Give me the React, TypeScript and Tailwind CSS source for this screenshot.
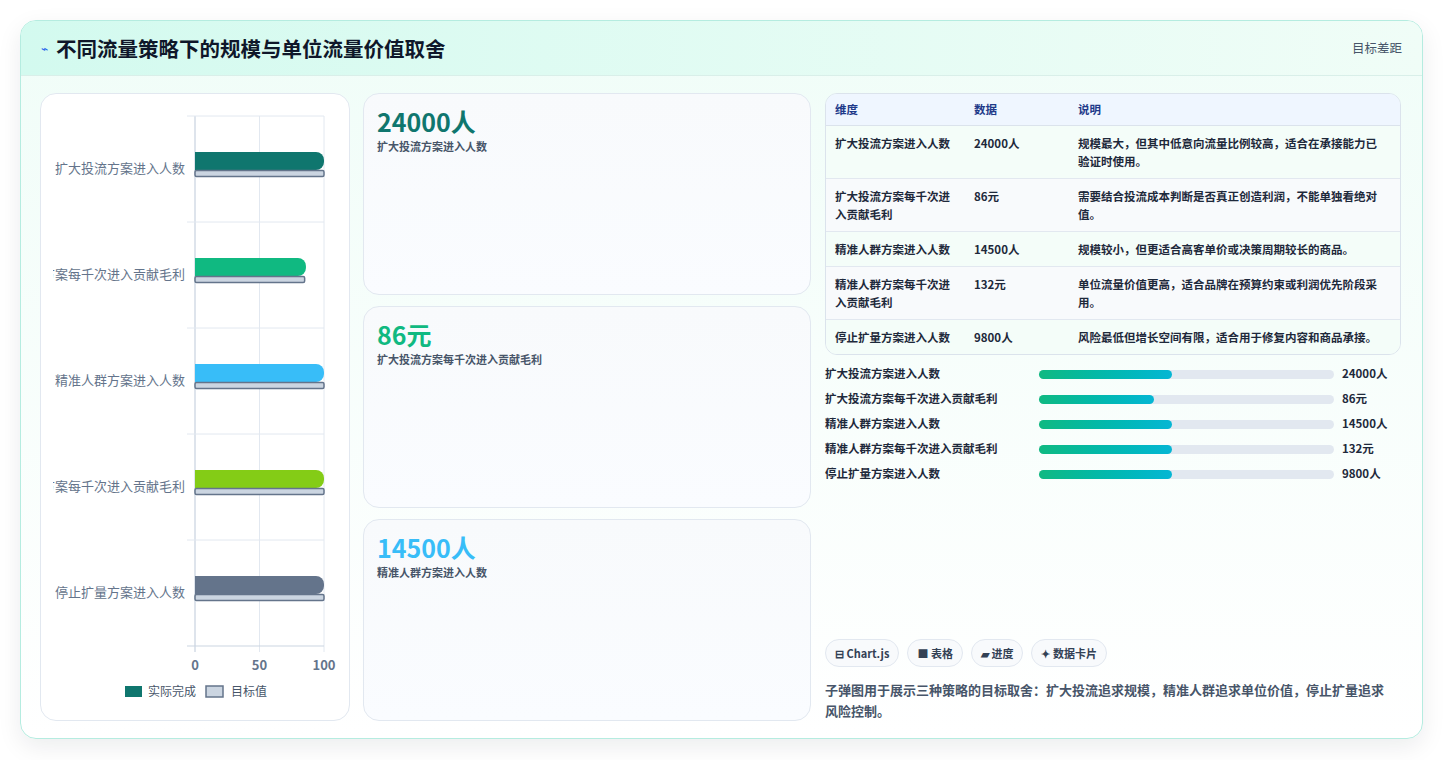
import React from "react";

const cats = [
  { l: "扩大投流方案进入人数", a: 100, t: 100, c: "#0f766e" },
  { l: "扩大投流方案每千次进入贡献毛利", a: 86, t: 85, c: "#10b981" },
  { l: "精准人群方案进入人数", a: 100, t: 100, c: "#38bdf8" },
  { l: "精准人群方案每千次进入贡献毛利", a: 100, t: 100, c: "#84cc16" },
  { l: "停止扩量方案进入人数", a: 100, t: 100, c: "#64748b" },
];

const rows = [
  ["扩大投流方案进入人数", "24000人", "规模最大，但其中低意向流量比例较高，适合在承接能力已验证时使用。"],
  ["扩大投流方案每千次进入贡献毛利", "86元", "需要结合投流成本判断是否真正创造利润，不能单独看绝对值。"],
  ["精准人群方案进入人数", "14500人", "规模较小，但更适合高客单价或决策周期较长的商品。"],
  ["精准人群方案每千次进入贡献毛利", "132元", "单位流量价值更高，适合品牌在预算约束或利润优先阶段采用。"],
  ["停止扩量方案进入人数", "9800人", "风险最低但增长空间有限，适合用于修复内容和商品承接。"],
];

const prog = [
  ["扩大投流方案进入人数", 45, "24000人"],
  ["扩大投流方案每千次进入贡献毛利", 39, "86元"],
  ["精准人群方案进入人数", 45, "14500人"],
  ["精准人群方案每千次进入贡献毛利", 45, "132元"],
  ["停止扩量方案进入人数", 45, "9800人"],
] as const;

function Chart() {
  const x0 = 154, x1 = 283, y0 = 22, y1 = 552;
  const band = (y1 - y0) / 5;
  const sx = (v: number) => x0 + ((x1 - x0) * v) / 100;
  return (
    <svg width="309" height="627" className="block">
      <defs>
        <clipPath id="lab"><rect x="12" y="0" width="136" height="600" /></clipPath>
      </defs>
      {[0, 50, 100].map((v) => (
        <line key={v} x1={sx(v)} x2={sx(v)} y1={y0} y2={y1 + 6} stroke="#e2e8f0" />
      ))}
      <line x1={x0} x2={x0} y1={y0} y2={y1 + 6} stroke="#cbd5e1" />
      {[0, 1, 2, 3, 4, 5].map((i) => (
        <line key={i} x1={x0 - 8} x2={x1} y1={y0 + band * i} y2={y0 + band * i} stroke={i === 5 ? "#cbd5e1" : "#e2e8f0"} />
      ))}
      {cats.map((c, i) => {
        const cy = y0 + band * i + band / 2;
        return (
          <g key={i}>
            <g clipPath="url(#lab)">
              <text x={144} y={cy + 4} textAnchor="end" fontSize="13" fill="#64748b">{c.l}</text>
            </g>
            <path d={`M${x0} ${cy - 17} H${sx(c.a) - 8} a8 8 0 0 1 8 8 v2 a8 8 0 0 1 -8 8 H${x0} Z`} fill={c.c} />
            <rect x={x0} y={cy + 1.5} width={sx(c.t) - x0} height={6} rx={1.5} fill="#cbd5e1" stroke="#64748b" strokeWidth="1.5" />
          </g>
        );
      })}
      {[0, 50, 100].map((v) => (
        <text key={v} x={sx(v)} y={576} textAnchor="middle" fontSize="13" fill="#64748b" fontWeight="600">{v}</text>
      ))}
      <rect x={84} y={592} width={17} height={11} fill="#0f766e" />
      <text x={107} y={602} fontSize="12" fill="#475569">实际完成</text>
      <rect x={165} y={592} width={17} height={11} fill="#cbd5e1" stroke="#64748b" strokeWidth="1.5" />
      <text x={190} y={602} fontSize="12" fill="#475569">目标值</text>
    </svg>
  );
}

export default function App() {
  return (
    <div className="w-[1444px] h-[760px] bg-white pt-5 pl-5" style={{ fontFamily: '"Noto Sans CJK SC", "Noto Sans", sans-serif' }}>
      <div className="w-[1403px] h-[719px] rounded-2xl border border-[#b5ece0] overflow-hidden shadow-[0_8px_24px_rgba(15,23,42,0.08)] bg-gradient-to-b from-[#f0fdf8] to-white flex flex-col">
        <div className="h-[55px] shrink-0 flex items-center justify-between px-5 bg-gradient-to-r from-[#d3faef] to-[#f0fdf7] border-b border-[#d9efe9]">
          <div className="flex items-center gap-2">
            <span className="text-[#2563eb] text-[12px]">⌁</span>
            <span className="text-[20.5px] font-bold text-[#0f172a]">不同流量策略下的规模与单位流量价值取舍</span>
          </div>
          <span className="text-[12.5px] text-[#475569]">目标差距</span>
        </div>
        <div className="flex gap-[13px] px-[19px] pt-[17px]">
          <div className="w-[310px] h-[628px] rounded-2xl border border-[#e2e8f0] bg-white shrink-0">
            <Chart />
          </div>
          <div className="w-[448px] flex flex-col gap-[11px] shrink-0">
            {[["24000人", "text-[#0f766e]", "扩大投流方案进入人数"], ["86元", "text-[#10b981]", "扩大投流方案每千次进入贡献毛利"], ["14500人", "text-[#38bdf8]", "精准人群方案进入人数"]].map(([v, c, l]) => (
              <div key={v} className="h-[202px] rounded-2xl border border-[#e2e8f0] bg-gradient-to-b from-[#f8fafc] to-[#fafcff] px-[13px] pt-[10px]">
                <div className={`text-[25px] font-bold leading-[34px] ${c}`}>{v}</div>
                <div className="text-[11px] font-semibold text-[#475569]">{l}</div>
              </div>
            ))}
          </div>
          <div className="flex-1 ml-[1px] mr-[2px] flex flex-col h-[628px]">
            <div className="rounded-xl border border-[#dbe3ec] overflow-hidden text-[11.5px] text-[#1e293b] font-semibold">
              <div className="flex h-[32px] items-center bg-[#eff6ff] text-[#1e3a8a] font-bold border-b border-[#dbe3ec]">
                <div className="w-[148px] pl-[9px]">维度</div>
                <div className="w-[104px]">数据</div>
                <div className="flex-1">说明</div>
              </div>
              {rows.map((r, i) => (
                <div key={i} className={`flex py-[8px] leading-[18px] ${i < 4 ? "border-b border-[#e2e8f0]" : ""} ${i % 2 === 0 ? "bg-[#f4fdf9]" : "bg-[#f8fafc]"}`}>
                  <div className="w-[148px] pl-[9px] pr-[16px]">{r[0]}</div>
                  <div className="w-[104px]">{r[1]}</div>
                  <div className="flex-1 pr-3">{r[2]}</div>
                </div>
              ))}
            </div>
            <div className="mt-[10px] flex flex-col gap-[7px] text-[11.5px] font-semibold text-[#1e293b]">
              {prog.map(([l, p, v]) => (
                <div key={l} className="flex items-center h-[18px]">
                  <div className="w-[214px]">{l}</div>
                  <div className="w-[295px] h-[9px] rounded-full bg-[#e2e8f0]">
                    <div className="h-full rounded-full bg-gradient-to-r from-[#10b981] to-[#06b6d4]" style={{ width: `${p}%` }} />
                  </div>
                  <div className="ml-2 font-bold">{v}</div>
                </div>
              ))}
            </div>
            <div className="mt-auto flex gap-2 text-[11px] font-bold text-[#334155]">
              {["⊟ Chart.js", "■ 表格", "▰ 进度", "✦ 数据卡片"].map((t) => (
                <span key={t} className="h-[28px] px-[9px] flex items-center rounded-full border border-[#e2e8f0] bg-[#f8fafc]">{t}</span>
              ))}
            </div>
            <div className="mt-[12px] text-[13px] font-semibold text-[#475569] leading-[21px] pr-2">子弹图用于展示三种策略的目标取舍：扩大投流追求规模，精准人群追求单位价值，停止扩量追求风险控制。</div>
          </div>
        </div>
      </div>
    </div>
  );
}
